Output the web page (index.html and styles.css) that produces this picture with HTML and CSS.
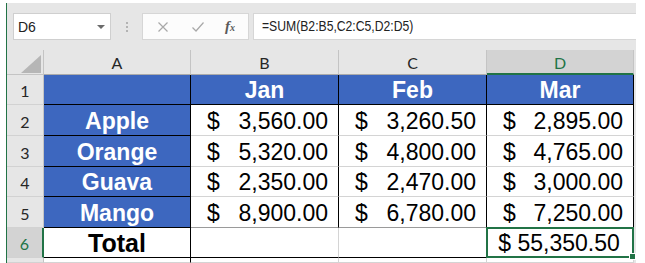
FILE: index.html
```html
<!DOCTYPE html>
<html>
<head>
<meta charset="utf-8">
<link rel="stylesheet" href="styles.css">
</head>
<body>
<div class="app">
  <div class="fbar">
    <div class="namebox">
      <span class="nb-text">D6</span>
      <svg class="nb-arrow" width="8" height="5" viewBox="0 0 8 5"><path d="M0 0H8L4 4Z" fill="#6b6b6b"/></svg>
    </div>
    <div class="sep"><i></i><i></i><i></i></div>
    <div class="fnbox">
      <svg class="ic" width="12" height="12" viewBox="0 0 12 12"><path d="M1.5 1.5L10.5 10.5M10.5 1.5L1.5 10.5" stroke="#a8a8a8" stroke-width="1.2" fill="none"/></svg>
      <svg class="ic" width="14" height="12" viewBox="0 0 14 12"><path d="M1.5 6.5L5 10L12.5 1.5" stroke="#a8a8a8" stroke-width="1.2" fill="none"/></svg>
      <span class="fx"><span class="fx-f">f</span><span class="fx-x">x</span></span>
    </div>
    <div class="formula"><span class="formula-text">=SUM(B2:B5,C2:C5,D2:D5)</span></div>
  </div>
  <div class="sheet">
    <div class="ch corner"><svg width="20" height="18" viewBox="0 0 20 18"><path d="M20 0V18H0Z" fill="#b6b6b6"/></svg></div>
    <div class="ch">A</div>
    <div class="ch">B</div>
    <div class="ch">C</div>
    <div class="ch ch-sel">D</div>
    <div class="gap"></div>

    <div class="rh">1</div>
    <div class="c blue bk"></div>
    <div class="c blue bk">Jan</div>
    <div class="c blue bk">Feb</div>
    <div class="c blue bk">Mar</div>
    <div class="gap"></div>

    <div class="rh">2</div>
    <div class="c blue bk">Apple</div>
    <div class="c num"><span>$</span><span>3,560.00</span></div>
    <div class="c num"><span>$</span><span>3,260.50</span></div>
    <div class="c num"><span>$</span><span>2,895.00</span></div>
    <div class="gap"></div>

    <div class="rh">3</div>
    <div class="c blue bk">Orange</div>
    <div class="c num"><span>$</span><span>5,320.00</span></div>
    <div class="c num"><span>$</span><span>4,800.00</span></div>
    <div class="c num"><span>$</span><span>4,765.00</span></div>
    <div class="gap"></div>

    <div class="rh">4</div>
    <div class="c blue bk">Guava</div>
    <div class="c num"><span>$</span><span>2,350.00</span></div>
    <div class="c num"><span>$</span><span>2,470.00</span></div>
    <div class="c num"><span>$</span><span>3,000.00</span></div>
    <div class="gap"></div>

    <div class="rh">5</div>
    <div class="c blue bk">Mango</div>
    <div class="c num last"><span>$</span><span>8,900.00</span></div>
    <div class="c num last"><span>$</span><span>6,780.00</span></div>
    <div class="c num last"><span>$</span><span>7,250.00</span></div>
    <div class="gap"></div>

    <div class="rh rh-sel">6</div>
    <div class="c total">Total</div>
    <div class="c tot-b"></div>
    <div class="c tot-c"></div>
    <div class="c sel">$ 55,350.50</div>
    <div class="gap"></div>

    <div class="rh"></div>
    <div class="c r7a"></div>
    <div class="c r7"></div>
    <div class="c r7"></div>
    <div class="c r7"></div>
    <div class="gap"></div>
  </div>
</div>
</body>
</html>
```
FILE: styles.css
```css
* { box-sizing: border-box; }
html, body { margin: 0; padding: 0; background: #ffffff; }
body { width: 645px; height: 263px; overflow: hidden; }

.app {
  margin-left: 6px;
  margin-top: 3px;
  width: 630px;
  height: 260px;
  overflow: hidden;
  background: #e6e6e6;
  border-left: 1px solid #217346;
  display: flex;
  flex-direction: column;
}

.fbar {
  flex-shrink: 0;
  height: 47px;
  padding-top: 10px;
  display: flex;
  align-items: flex-start;
}
.namebox {
  margin-left: 6px;
  width: 98px;
  height: 27px;
  background: #fff;
  border: 1px solid #cfcfcf;
  display: flex;
  align-items: center;
  justify-content: space-between;
  padding: 0 5px 0 4px;
}
.nb-text {
  font-family: "Liberation Sans", Arial, sans-serif;
  font-size: 14px;
  color: #222;
}
.nb-arrow { margin-top: 1px; }
.sep {
  width: 31px;
  height: 27px;
  display: flex;
  flex-direction: column;
  align-items: center;
  justify-content: center;
  gap: 2px;
}
.sep i { display: block; width: 2px; height: 2px; background: #b3b3b3; }
.fnbox {
  width: 107px;
  height: 27px;
  background: #fcfcfc;
  border: 1px solid #d6d6d6;
  display: flex;
  align-items: center;
  padding-left: 14px;
}
.fnbox .ic:first-child { margin-right: 22px; }
.fnbox .ic:nth-child(2) { margin-right: 20px; }
.fx {
  font-family: "Liberation Serif", "Times New Roman", serif;
  font-style: italic;
  font-weight: bold;
  color: #5a5a5a;
  font-size: 15px;
  line-height: 1;
}
.fx-x { font-size: 10px; }
.formula {
  margin-left: 4px;
  flex: 1;
  height: 27px;
  background: #fff;
  border-top: 1px solid #d6d6d6;
  border-bottom: 1px solid #d6d6d6;
  border-left: 1px solid #d6d6d6;
  padding-left: 8px;
  font-family: "Liberation Sans", Arial, sans-serif;
  font-size: 14px;
  line-height: 25px;
  color: #222;
}
.formula-text {
  display: inline-block;
  transform: scaleX(0.87);
  transform-origin: left center;
}

.sheet {
  flex-shrink: 0;
  display: grid;
  grid-template-columns: 37px 147px 148px 148px 147px 2px;
  grid-template-rows: 25px 30px 31px 31px 30px 31px 30px 5px;
}
.gap { background: #e6e6e6; }

.ch {
  background: #e6e6e6;
  border-right: 1px solid #c4c4c4;
  border-bottom: 1px solid #ababab;
  font-family: Lato, "Open Sans", sans-serif;
  font-size: 16px;
  line-height: 20px;
  color: #262626;
  display: flex;
  align-items: flex-end;
  justify-content: center;
  padding-bottom: 1px;
}
.ch.corner {
  border-bottom-color: #c4c4c4;
  justify-content: flex-end;
  padding: 0 2px 1px 0;
}
.ch-sel {
  background: #d3d3d3;
  color: #217346;
  border-bottom: 2px solid #217346;
  padding-bottom: 0;
}

.rh {
  background: #e6e6e6;
  border-right: 1px solid #c4c4c4;
  border-bottom: 1px solid #d2d2d2;
  font-family: Lato, "Open Sans", sans-serif;
  font-size: 16px;
  line-height: 20px;
  color: #262626;
  display: flex;
  align-items: flex-end;
  justify-content: center;
  padding-bottom: 3px;
}
.rh-sel {
  background: #d3d3d3;
  color: #217346;
  border-right: 2px solid #217346;
}

.c {
  background: #fff;
  border-right: 1px solid #000;
  border-bottom: 1px solid #d4d4d4;
  font-family: "Liberation Sans", Arial, sans-serif;
  font-size: 23px;
  line-height: 26px;
  color: #000;
  display: flex;
  align-items: flex-end;
  justify-content: center;
  padding-bottom: 1px;
}
.c.blue {
  background: #3d67bf;
  color: #fff;
  font-weight: bold;
}
.c.bk { border-bottom-color: #000; }
.c.num {
  justify-content: space-between;
  padding-left: 16px;
  padding-right: 10px;
}
.c.last { border-bottom-color: #9a9a9a; }
.c.total {
  font-weight: bold;
  font-size: 25px;
  border-bottom-color: #000;
}
.c.tot-b { border-bottom-color: #000; border-right-color: #d4d4d4; }
.c.tot-c { border-bottom-color: #000; border-right-color: #d4d4d4; }
.c.sel {
  position: relative;
  border-bottom-color: #000;
  padding-right: 2px;
}
.c.sel::before {
  content: "";
  position: absolute;
  left: -1px;
  top: -1px;
  right: -1px;
  bottom: -1px;
  border: 2px solid #217346;
}
.c.sel::after {
  content: "";
  position: absolute;
  right: -3px;
  bottom: -3px;
  width: 5px;
  height: 5px;
  background: #217346;
  border: 1px solid #fff;
}
.c.r7 { border-right-color: #d4d4d4; border-bottom-color: #d4d4d4; }
.c.r7a { border-bottom-color: #d4d4d4; }
```
